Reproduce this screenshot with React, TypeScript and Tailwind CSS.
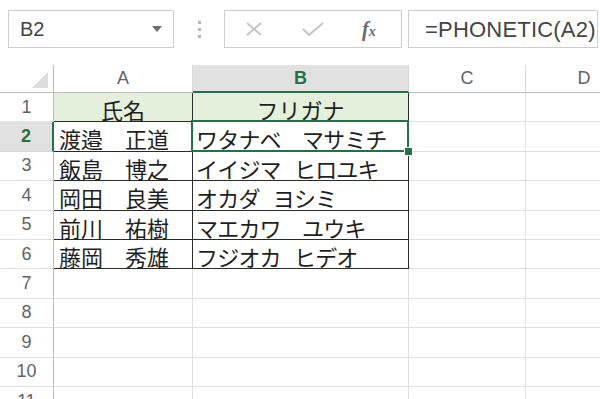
import React from "react";

const rows: { a: string; b: string; spaced?: boolean }[] = [
  { a: "氏名", b: "フリガナ" },
  { a: "渡邉　正道", b: "ワタナベ　マサミチ" },
  { a: "飯島　博之", b: "イイジマ ヒロユキ", spaced: true },
  { a: "岡田　良美", b: "オカダ ヨシミ", spaced: true },
  { a: "前川　祐樹", b: "マエカワ　ユウキ" },
  { a: "藤岡　秀雄", b: "フジオカ ヒデオ", spaced: true },
];

const jp = "font-['Noto_Sans_CJK_JP',sans-serif] text-[22px] text-[#1f1f1f] leading-[32px] whitespace-nowrap";
const head = "font-['Liberation_Sans',Arial,sans-serif] text-[18px] text-[#5f6368]";

function Toolbar() {
  return (
    <div className="flex h-[65px] items-start pt-[10px] pl-[8px] pr-[2px]">
      <div className="flex h-[38px] w-[166px] items-center justify-between border border-[#cdcdcd] pl-[11px] pr-[11px]">
        <span className="font-['Liberation_Sans',Arial,sans-serif] text-[20px] text-[#444]">B2</span>
        <svg width="10" height="6" viewBox="0 0 10 6">
          <path d="M0 0h10L5 6z" fill="#707070" />
        </svg>
      </div>
      <div className="flex h-[38px] w-[50px] flex-col items-center justify-center gap-[4px]">
        <span className="block h-[3px] w-[3px] bg-[#b5b5b5]" />
        <span className="block h-[3px] w-[3px] bg-[#b5b5b5]" />
        <span className="block h-[3px] w-[3px] bg-[#b5b5b5]" />
      </div>
      <div className="flex h-[38px] w-[178px] items-center border border-[#cdcdcd]">
        <svg width="18" height="14" viewBox="0 0 18 14" className="ml-[20px]">
          <path d="M2 1l14 12M16 1L2 13" stroke="#c4c4c4" strokeWidth="2" fill="none" />
        </svg>
        <svg width="22" height="14" viewBox="0 0 22 14" className="ml-[39px]">
          <path d="M1 7l6 6L21 1" stroke="#c4c4c4" strokeWidth="2" fill="none" />
        </svg>
        <span className="ml-[38px] font-['Liberation_Serif',serif] text-[20px] italic font-bold text-[#6a6a6a] leading-none">
          f<span className="text-[14px]">x</span>
        </span>
      </div>
      <div className="ml-[6px] flex h-[38px] flex-1 items-center border border-[#cdcdcd] pl-[16px]">
        <span className="font-['Liberation_Sans',Arial,sans-serif] text-[22px] text-[#444] tracking-[0.2px]">
          =PHONETIC(A2)
        </span>
      </div>
    </div>
  );
}

export default function App() {
  const bodyRows = Array.from({ length: 11 }, (_, i) => i);
  return (
    <div className="relative h-[399px] w-[600px] overflow-hidden bg-white">
      <Toolbar />
      <div className="grid grid-cols-[54px_139px_216px_117px_117px] grid-rows-[28px_repeat(11,29.4px)]">
        {/* header row */}
        <div className="flex items-end justify-end border-r border-b border-[#bdbdbd] pr-[5px] pb-[4px]">
          <svg width="16" height="16" viewBox="0 0 16 16">
            <path d="M16 0v16H0z" fill="#dcdcdc" />
          </svg>
        </div>
        <div className={`flex items-center justify-center border-r border-b border-r-[#d8d8d8] border-b-[#bdbdbd] ${head}`}>A</div>
        <div className="flex items-center justify-center border-r border-b-2 border-r-[#d8d8d8] border-b-[#217346] bg-[#e1e1e1] font-['Liberation_Sans',Arial,sans-serif] text-[18px] font-bold text-[#217346]">
          B
        </div>
        <div className={`flex items-center justify-center border-r border-b border-r-[#d8d8d8] border-b-[#bdbdbd] ${head}`}>C</div>
        <div className={`flex items-center justify-center border-r border-b border-r-[#d8d8d8] border-b-[#bdbdbd] ${head}`}>D</div>

        {bodyRows.map((i) => {
          const r = rows[i];
          const selRow = i === 1;
          const inBlock = i < rows.length;
          const blockBorder = "border-r border-b border-[#2b2b2b]";
          const gridBorder = "border-r border-b border-[#e0e0e0]";
          return (
            <React.Fragment key={i}>
              <div
                className={
                  selRow
                    ? "flex items-center justify-center border-b border-b-[#d4d4d4] border-r-2 border-r-[#217346] bg-[#e1e1e1] font-['Liberation_Sans',Arial,sans-serif] text-[18px] font-bold text-[#217346]"
                    : `flex items-center justify-center border-b border-r border-b-[#e0e0e0] border-r-[#bdbdbd] ${head}`
                }
              >
                {i + 1}
              </div>
              <div
                className={`${inBlock ? blockBorder : gridBorder} ${jp} ${
                  i === 0 ? "bg-[#e4efdc] text-center" : "pl-[5px]"
                }`}
              >
                {r ? r.a : ""}
              </div>
              <div
                className={`relative ${inBlock ? blockBorder : gridBorder} ${jp} ${
                  i === 0 ? "bg-[#e4efdc] text-center" : "pl-[3px] tracking-[-0.8px]"
                } ${r && r.spaced ? "[word-spacing:9px]" : ""}`}
              >
                {r ? r.b : ""}
                {selRow && (
                  <>
                    <div className="absolute -top-[2px] -left-[2px] -right-[1px] -bottom-[1px] z-10 border-2 border-[#217346]" />
                    <div className="absolute -right-[5px] -bottom-[5px] z-20 h-[9px] w-[9px] border border-white bg-[#217346]" />
                  </>
                )}
              </div>
              <div className={gridBorder} />
              <div className={gridBorder} />
            </React.Fragment>
          );
        })}
      </div>
    </div>
  );
}
